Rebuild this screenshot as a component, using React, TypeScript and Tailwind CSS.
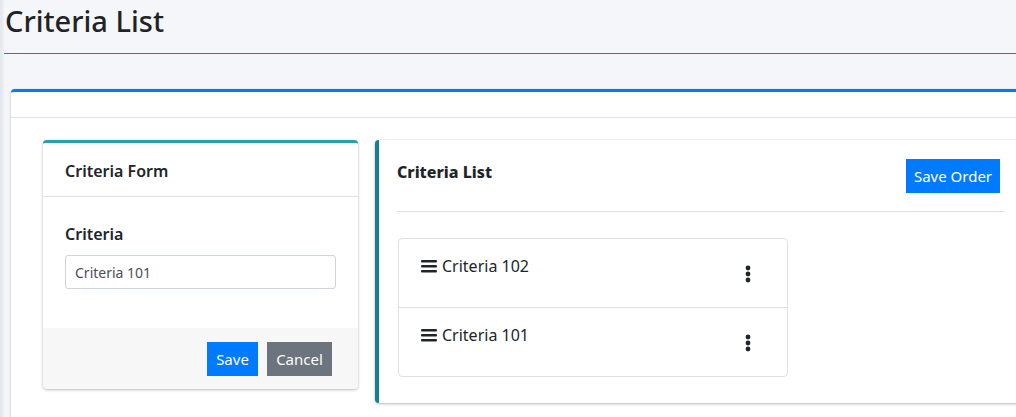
import React from "react";

const font = { fontFamily: '"Noto Sans", "Open Sans", sans-serif' };

function Bars() {
  return (
    <svg width="16" height="14" viewBox="0 0 16 14" className="mr-[5px] shrink-0">
      <rect x="0" y="1" width="16" height="2.4" rx="1" fill="#212529" />
      <rect x="0" y="6" width="16" height="2.4" rx="1" fill="#212529" />
      <rect x="0" y="11" width="16" height="2.4" rx="1" fill="#212529" />
    </svg>
  );
}

function Kebab() {
  return (
    <svg width="6" height="18" viewBox="0 0 6 18">
      <circle cx="3" cy="3" r="2.4" fill="#212529" />
      <circle cx="3" cy="9" r="2.4" fill="#212529" />
      <circle cx="3" cy="15" r="2.4" fill="#212529" />
    </svg>
  );
}

const items = ["Criteria 102", "Criteria 101"];

export default function App() {
  return (
    <div className="flex h-[417px] w-[1016px] overflow-hidden bg-[#f4f6f9] text-[#212529]" style={font}>
      <div className="w-[4px] shrink-0 bg-gradient-to-r from-[#e4e6ea] to-[#eef0f3]" />
      <div className="flex min-w-0 flex-1 flex-col">
        <div className="h-[53px] shrink-0">
          <h1 className="pl-[1px] pt-[2px] text-[29px] font-medium leading-[38px] text-[#1f2326]">Criteria List</h1>
        </div>
        <div className="h-px shrink-0 bg-[#2a78d6]" />
        <div className="ml-[7px] mt-[35px] w-[1060px] shrink-0 rounded-t-[4px] border-t-[3px] border-[#007bff] bg-white shadow-[0_0_1px_rgba(0,0,0,0.125),0_1px_3px_rgba(0,0,0,0.2)]">
          <div className="h-[26px] border-b border-[#dee2e6]" />
          <div className="flex items-start gap-[17px] pl-[32px] pt-[22px]">
            {/* form card */}
            <div className="w-[315px] shrink-0 rounded-[4px] border-t-[3px] border-[#2aa0a9] bg-white shadow-[0_0_1px_rgba(0,0,0,0.2),0_1px_3px_rgba(0,0,0,0.25)]">
              <div className="flex h-[54px] items-center border-b border-[#dee2e6] px-[22px] pt-[2px]">
                <span className="text-[16px] font-semibold">Criteria Form</span>
              </div>
              <div className="px-[22px] pb-[39px] pt-[26px]">
                <div className="mb-[10px] text-[16px] font-semibold leading-[22px]">Criteria</div>
                <input
                  readOnly
                  value="Criteria 101"
                  className="h-[34px] w-full rounded-[3px] border border-[#ced4da] px-[9px] text-[14px] text-[#495057] outline-none"
                  style={font}
                />
              </div>
              <div className="flex justify-end gap-[9px] rounded-b-[4px] bg-[#f7f7f7] pb-[13px] pr-[26px] pt-[14px]">
                <button className="h-[34px] w-[51px] bg-[#007bff] text-[15px] text-white">Save</button>
                <button className="h-[34px] w-[65px] bg-[#6c757d] text-[15px] text-white">Cancel</button>
              </div>
            </div>
            {/* list card */}
            <div className="w-[652px] shrink-0 rounded-l-[4px] border-l-[4px] border-[#17808a] bg-white pb-[26px] pl-[18px] pr-[22px] shadow-[0_0_1px_rgba(0,0,0,0.2),0_1px_3px_rgba(0,0,0,0.25)]">
              <div className="flex h-[72px] items-start justify-between border-b border-[#dee2e6] pr-[5px] pt-[18px]">
                <span className="pt-[2px] text-[16px] font-extrabold leading-[24px]">Criteria List</span>
                <button className="mt-[1px] h-[34px] w-[94px] bg-[#007bff] text-[15px] text-white">Save Order</button>
              </div>
              <div className="ml-[1px] mt-[26px] w-[390px] rounded-[4px] border border-[#dee2e6]">
                {items.map((t, i) => (
                  <div
                    key={t}
                    className={
                      "flex items-start justify-between pl-[22px] pr-[36px] " +
                      (i > 0 ? "h-[69px] border-t border-[#dee2e6]" : "h-[68px]")
                    }
                  >
                    <div className="flex items-center pt-[15px]">
                      <Bars />
                      <span className="text-[16px] leading-[24px]">{t}</span>
                    </div>
                    <div className="pt-[26px]">
                      <Kebab />
                    </div>
                  </div>
                ))}
              </div>
            </div>
          </div>
          <div className="h-[40px]" />
        </div>
      </div>
    </div>
  );
}
